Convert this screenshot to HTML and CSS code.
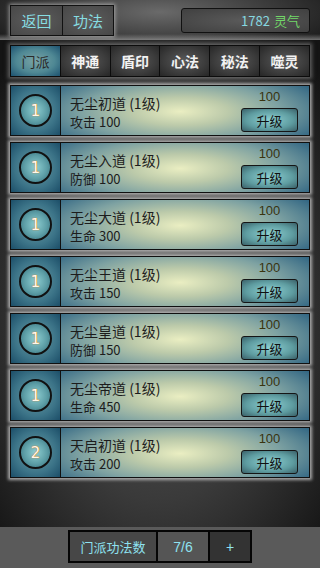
FILE: index.html
```html
<!DOCTYPE html>
<html lang="zh">
<head>
<meta charset="utf-8">
<link rel="stylesheet" href="styles.css">
</head>
<body>
<div class="page">
  <div class="header">
    <div class="navgroup">
      <div class="navbtn">返回</div>
      <div class="navbtn">功法</div>
    </div>
    <div class="currency"><span class="num">1782</span><span class="unit">灵气</span></div>
  </div>
  <div class="tabs">
    <div class="tab active">门派</div>
    <div class="tab">神通</div>
    <div class="tab">盾印</div>
    <div class="tab">心法</div>
    <div class="tab">秘法</div>
    <div class="tab">噬灵</div>
  </div>
  <div class="list">
    <div class="card">
      <div class="badge-cell"><div class="badge">1</div></div>
      <div class="main">
        <div class="info"><div class="title">无尘初道 (1级)</div><div class="stat">攻击 100</div></div>
        <div class="action"><div class="cost">100</div><div class="upbtn">升级</div></div>
      </div>
    </div>
    <div class="card">
      <div class="badge-cell"><div class="badge">1</div></div>
      <div class="main">
        <div class="info"><div class="title">无尘入道 (1级)</div><div class="stat">防御 100</div></div>
        <div class="action"><div class="cost">100</div><div class="upbtn">升级</div></div>
      </div>
    </div>
    <div class="card">
      <div class="badge-cell"><div class="badge">1</div></div>
      <div class="main">
        <div class="info"><div class="title">无尘大道 (1级)</div><div class="stat">生命 300</div></div>
        <div class="action"><div class="cost">100</div><div class="upbtn">升级</div></div>
      </div>
    </div>
    <div class="card">
      <div class="badge-cell"><div class="badge">1</div></div>
      <div class="main">
        <div class="info"><div class="title">无尘王道 (1级)</div><div class="stat">攻击 150</div></div>
        <div class="action"><div class="cost">100</div><div class="upbtn">升级</div></div>
      </div>
    </div>
    <div class="card">
      <div class="badge-cell"><div class="badge">1</div></div>
      <div class="main">
        <div class="info"><div class="title">无尘皇道 (1级)</div><div class="stat">防御 150</div></div>
        <div class="action"><div class="cost">100</div><div class="upbtn">升级</div></div>
      </div>
    </div>
    <div class="card">
      <div class="badge-cell"><div class="badge">1</div></div>
      <div class="main">
        <div class="info"><div class="title">无尘帝道 (1级)</div><div class="stat">生命 450</div></div>
        <div class="action"><div class="cost">100</div><div class="upbtn">升级</div></div>
      </div>
    </div>
    <div class="card">
      <div class="badge-cell"><div class="badge">2</div></div>
      <div class="main">
        <div class="info"><div class="title">天启初道 (1级)</div><div class="stat">攻击 200</div></div>
        <div class="action"><div class="cost">100</div><div class="upbtn">升级</div></div>
      </div>
    </div>
  </div>
  <div class="footer">
    <div class="footgroup">
      <div class="fcell fc1">门派功法数</div>
      <div class="fcell fc2">7/6</div>
      <div class="fcell fc3">+</div>
    </div>
  </div>
</div>
</body>
</html>
```
FILE: styles.css
```css
* { box-sizing: border-box; }
html, body { margin: 0; padding: 0; }
body {
  width: 320px;
  height: 568px;
  overflow: hidden;
  background: #111;
  font-family: "Noto Sans CJK SC", "Liberation Sans", sans-serif;
}
.page {
  width: 320px;
  height: 568px;
  display: flex;
  flex-direction: column;
  background: radial-gradient(ellipse 70% 60% at 50% 55%, #5a5a5a 0%, #3a3a3a 55%, #141414 100%);
}
.header {
  height: 40px;
  padding: 5px 10px 0 10px;
  display: flex;
  justify-content: space-between;
  align-items: flex-start;
  background:
    linear-gradient(to bottom, rgba(0,0,0,0) 0%, rgba(0,0,0,0) 85%, rgba(170,170,170,0.6) 100%),
    radial-gradient(ellipse 60% 120% at 50% 30%, #6a6a6a 0%, #3a3a3a 60%, #1c1c1c 100%);
}
.navgroup {
  display: flex;
  height: 31px;
  border: 1px solid #111;
  box-shadow: 0 0 4px 1px rgba(200,200,200,0.7);
}
.navbtn {
  width: 51px;
  display: flex;
  align-items: center;
  justify-content: center;
  color: #86dde2;
  font-size: 15px;
  background: radial-gradient(ellipse at center, #5e5e5e 0%, #474747 100%);
}
.navbtn + .navbtn { border-left: 1px solid #111; }
.currency {
  margin-top: 3px;
  width: 129px;
  height: 25px;
  border: 1px solid #111;
  border-radius: 3px;
  background: radial-gradient(ellipse at center, #5a5a5a 0%, #404040 100%);
  display: flex;
  align-items: center;
  justify-content: flex-end;
  padding-right: 9px;
  font-size: 13px;
}
.currency .num { color: #86d8e0; margin-right: 4px; }
.currency .unit { color: #72d868; }
.tabs {
  margin: 5px 10px 0 10px;
  height: 32px;
  display: flex;
  border: 1px solid #0c0c0c;
  background: #0c0c0c;
  gap: 1px;
  box-shadow: 0 0 4px 2px rgba(170,170,170,0.5);
}
.tab {
  flex: 1;
  display: flex;
  align-items: center;
  justify-content: center;
  font-size: 14px;
  font-weight: bold;
  color: #f2f2f2;
  background: radial-gradient(ellipse at center, #5a5a5a 0%, #3c3c3c 60%, #262626 100%);
}
.tab.active {
  color: #2a2a2a;
  font-weight: normal;
  background: radial-gradient(ellipse at center, #7aa4a6 0%, #4f8894 55%, #1d5270 100%);
}
.list {
  margin-top: 8px;
  padding: 0 10px;
  display: flex;
  flex-direction: column;
  gap: 6px;
}
.card {
  height: 51px;
  display: flex;
  border: 1px solid #101010;
  box-shadow: 0 0 3px 2px rgba(190,190,190,0.85);
}
.badge-cell {
  width: 50px;
  border-right: 1px solid #101010;
  display: flex;
  align-items: center;
  justify-content: center;
  background: radial-gradient(ellipse at center, #6c9ca2 0%, #3c7488 60%, #1c4e68 100%);
}
.badge {
  width: 33px;
  height: 33px;
  border-radius: 50%;
  border: 2px solid #111;
  display: flex;
  align-items: center;
  justify-content: center;
  font-family: "DejaVu Sans", sans-serif;
  font-size: 15px;
  color: #fff8ec;
  text-shadow: 0 0 1px #d07a20, 0 0 1px #d07a20;
  background: radial-gradient(circle at center, #8fcfd2 0%, #5d9ea6 55%, #2f6a78 100%);
}
.main {
  flex: 1;
  display: flex;
  justify-content: space-between;
  align-items: center;
  padding: 0 11px 0 9px;
  background: radial-gradient(ellipse 65% 95% at 48% 52%, #eaeec2 0%, #bccaaa 30%, #7ea2a2 62%, #2a6080 100%);
}
.info { display: flex; flex-direction: column; padding-top: 1px; }
.title { font-size: 14px; color: #1c1c1c; line-height: 20px; }
.stat { font-size: 13px; color: #1c1c1c; line-height: 17px; }
.action { display: flex; flex-direction: column; align-items: center; padding-top: 1px; }
.cost {
  font-family: "Liberation Sans", sans-serif;
  font-size: 13px;
  color: #3a3410;
  line-height: 14px;
  margin-bottom: 4px;
}
.upbtn {
  width: 57px;
  height: 24px;
  border: 1px solid #151515;
  border-radius: 3px;
  display: flex;
  align-items: center;
  justify-content: center;
  font-size: 13px;
  color: #111;
  background: radial-gradient(ellipse at center, #8ed0d2 0%, #5e9ca0 60%, #3a6068 100%);
}
.footer {
  margin-top: auto;
  height: 41px;
  background: #5a5a5a;
  display: flex;
  justify-content: center;
  padding-top: 3px;
}
.footgroup {
  height: 33px;
  display: flex;
  border: 2px solid #050505;
  background: #050505;
  gap: 2px;
}
.fcell {
  display: flex;
  align-items: center;
  justify-content: center;
  color: #8ee2f0;
  font-size: 13px;
}
.fc1 { width: 86px; background: #474747; }
.fc2 { width: 50px; background: #555; font-family: "Liberation Sans", sans-serif; font-size: 14px; }
.fc3 { width: 40px; background: #333; font-family: "Liberation Sans", sans-serif; font-size: 14px; }
```
